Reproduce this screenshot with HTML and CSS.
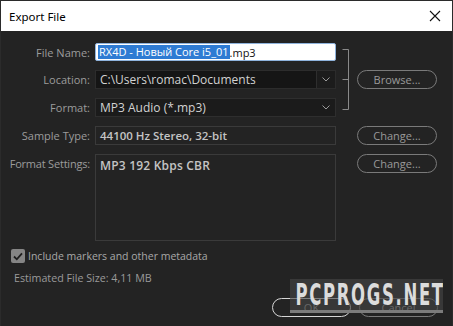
FILE: index.html
```html
<!DOCTYPE html>
<html lang="en">
<head>
    <meta charset="UTF-8">
    <meta name="viewport" content="width=device-width, initial-scale=1.0">
    <title>Export File</title>
    <link rel="stylesheet" href="styles.css">
</head>
<body>
    <div class="window">
        <div class="titlebar">
            <span class="title">Export File</span>
            <svg class="close" width="12" height="12" viewBox="0 0 12 12">
                <path d="M1 1 L11 11 M11 1 L1 11" stroke="#111" stroke-width="1.1" fill="none"/>
            </svg>
        </div>
        <div class="content">
            <div class="form">
                <label class="lbl" for="fileName">File Name:</label>
                <div class="field input" id="fileName"><span class="sel">RX4D - Новый Core i5_01</span>.mp3</div>
                <svg class="bracket" width="21" height="73" viewBox="0 0 21 73">
                    <path d="M6.5 6.5 H12.5 V66.5 H6.5 M6.5 36.5 H12.5" stroke="#8a8a8a" stroke-width="1" fill="none"/>
                </svg>

                <label class="lbl">Location:</label>
                <div class="field combo darker">
                    <span class="val">C:\Users\romac\Documents</span>
                    <span class="arrow"><svg width="8" height="5" viewBox="0 0 8 5"><path d="M0.5 0.5 L4 4 L7.5 0.5" stroke="#9a9a9a" fill="none"/></svg></span>
                </div>
                <button class="btn browse" type="button">Browse...</button>

                <label class="lbl">Format:</label>
                <div class="field combo dark">
                    <span class="val">MP3 Audio (*.mp3)</span>
                    <span class="arrow plain"><svg width="8" height="5" viewBox="0 0 8 5"><path d="M0.5 0.5 L4 4 L7.5 0.5" stroke="#9a9a9a" fill="none"/></svg></span>
                </div>

                <label class="lbl">Sample Type:</label>
                <div class="field box"><span class="val">44100 Hz Stereo, 32-bit</span></div>
                <button class="btn" type="button">Change...</button>

                <label class="lbl top">Format Settings:</label>
                <div class="field box area"><span class="val">MP3 192 Kbps CBR</span></div>
                <button class="btn change2" type="button">Change...</button>
            </div>

            <div class="check-row">
                <span class="checkbox">
                    <svg width="10" height="9" viewBox="0 0 10 9"><path d="M1 4.5 L3.8 7.3 L9 1.3" stroke="#1e1e1e" stroke-width="1.8" fill="none"/></svg>
                </span>
                <span class="check-label">Include markers and other metadata</span>
            </div>
            <div class="size">Estimated File Size: 4,11 MB</div>

            <div class="actions">
                <button class="btn ok" type="button">OK</button>
                <button class="btn" type="button">Cancel</button>
            </div>
        </div>
        <div class="watermark"><span>PCPROGS.NET</span></div>
    </div>
</body>
</html>
```
FILE: styles.css
```css
body {
    margin: 0;
    background-color: #232323;
    font-family: "Open Sans", "Noto Sans", sans-serif;
}
.window {
    position: relative;
    width: 453px;
    height: 326px;
    box-sizing: border-box;
    border: 1px solid #2b2b2b;
    border-bottom: none;
    background-color: #232323;
    overflow: hidden;
}
.titlebar {
    height: 30px;
    background-color: #FFFFFF;
    display: flex;
    align-items: center;
    justify-content: space-between;
    padding: 0 10px 0 8px;
}
.title {
    font-family: "Noto Sans", sans-serif;
    font-size: 11.5px;
    color: #000000;
}
.close {
    margin-right: 1px;
}
.content {
    padding: 12px 0 0 7px;
}
.form {
    display: grid;
    grid-template-columns: 87px 241px 21px 80px;
    grid-template-rows: 18px 19px 19px 19px 87px;
    row-gap: 9px;
}
.lbl {
    grid-column: 1;
    font-size: 11px;
    color: #9c9c9c;
    white-space: nowrap;
    padding-right: 5px;
    display: flex;
    align-items: center;
    justify-content: flex-end;
}
.lbl.top {
    align-items: flex-start;
    padding-top: 2px;
    letter-spacing: -0.2px;
}
.field {
    grid-column: 2;
    box-sizing: border-box;
    display: flex;
    align-items: center;
    font-size: 12px;
    color: #d2d2d2;
    padding-left: 4px;
    white-space: nowrap;
}
.input {
    background-color: #FFFFFF;
    border: 1px solid #8fb3dc;
    border-radius: 2px;
    color: #111111;
    padding-left: 2px;
    font-size: 11px;
}
.sel {
    background-color: #2e7bd3;
    color: #FFFFFF;
    padding: 0 1px;
    line-height: 14px;
}
.combo {
    justify-content: space-between;
    padding-right: 0;
}
.darker {
    background-color: #151515;
    border: 1px solid #2c2c2c;
}
.dark {
    background-color: #1b1b1b;
    border: 1px solid #2e2e2e;
}
.arrow {
    width: 18px;
    height: 100%;
    display: flex;
    align-items: center;
    justify-content: center;
    border-left: 1px solid #2e2e2e;
    background-color: #1c1c1c;
}
.arrow.plain {
    border-left: none;
    background-color: transparent;
}
.box {
    border: 1px solid #3a3a3a;
    font-weight: 600;
    font-size: 11.5px;
    color: #c4c4c4;
}
.area {
    align-items: flex-start;
    padding-top: 2px;
    font-size: 12px;
    letter-spacing: 0.2px;
}
.bracket {
    grid-column: 3;
    grid-row: 1 / 4;
}
.btn {
    box-sizing: border-box;
    height: 19px;
    width: 80px;
    background: transparent;
    border: 1.5px solid #7a7a7a;
    border-radius: 10px;
    color: #9a9a9a;
    font-family: "Open Sans", "Noto Sans", sans-serif;
    font-size: 11px;
    padding: 0;
    cursor: pointer;
}
.form .btn {
    grid-column: 4;
}
.browse {
    grid-row: 2;
}
.change2 {
    align-self: start;
}
.check-row {
    display: flex;
    align-items: center;
    margin: 8px 0 0 3px;
    height: 14px;
}
.checkbox {
    width: 14px;
    height: 14px;
    border-radius: 2px;
    background-color: #858585;
    display: flex;
    align-items: center;
    justify-content: center;
    margin-right: 3px;
}
.check-label {
    font-size: 10.5px;
    color: #a8a8a8;
}
.size {
    margin: 8px 0 0 6px;
    font-size: 10.7px;
    color: #9a9a9a;
}
.actions {
    display: flex;
    justify-content: flex-end;
    gap: 8px;
    margin: 13px 14px 0 0;
}
.actions .btn {
    width: 79px;
}
.ok {
    border-color: #d6d6d6;
}
.watermark {
    position: absolute;
    left: 289px;
    top: 278px;
    width: 153px;
    height: 34px;
    box-sizing: border-box;
    background-color: rgba(70, 70, 70, 0.6);
    border-bottom: 3px solid #7c7c7c;
    overflow: hidden;
}
.watermark span {
    display: block;
    width: 260px;
    margin-left: -53px;
    text-align: center;
    font-family: "DejaVu Sans", sans-serif;
    font-weight: bold;
    font-size: 30px;
    line-height: 31px;
    color: #dcdcdc;
    letter-spacing: 3px;
    transform: scaleX(0.55);
    white-space: nowrap;
}
```
